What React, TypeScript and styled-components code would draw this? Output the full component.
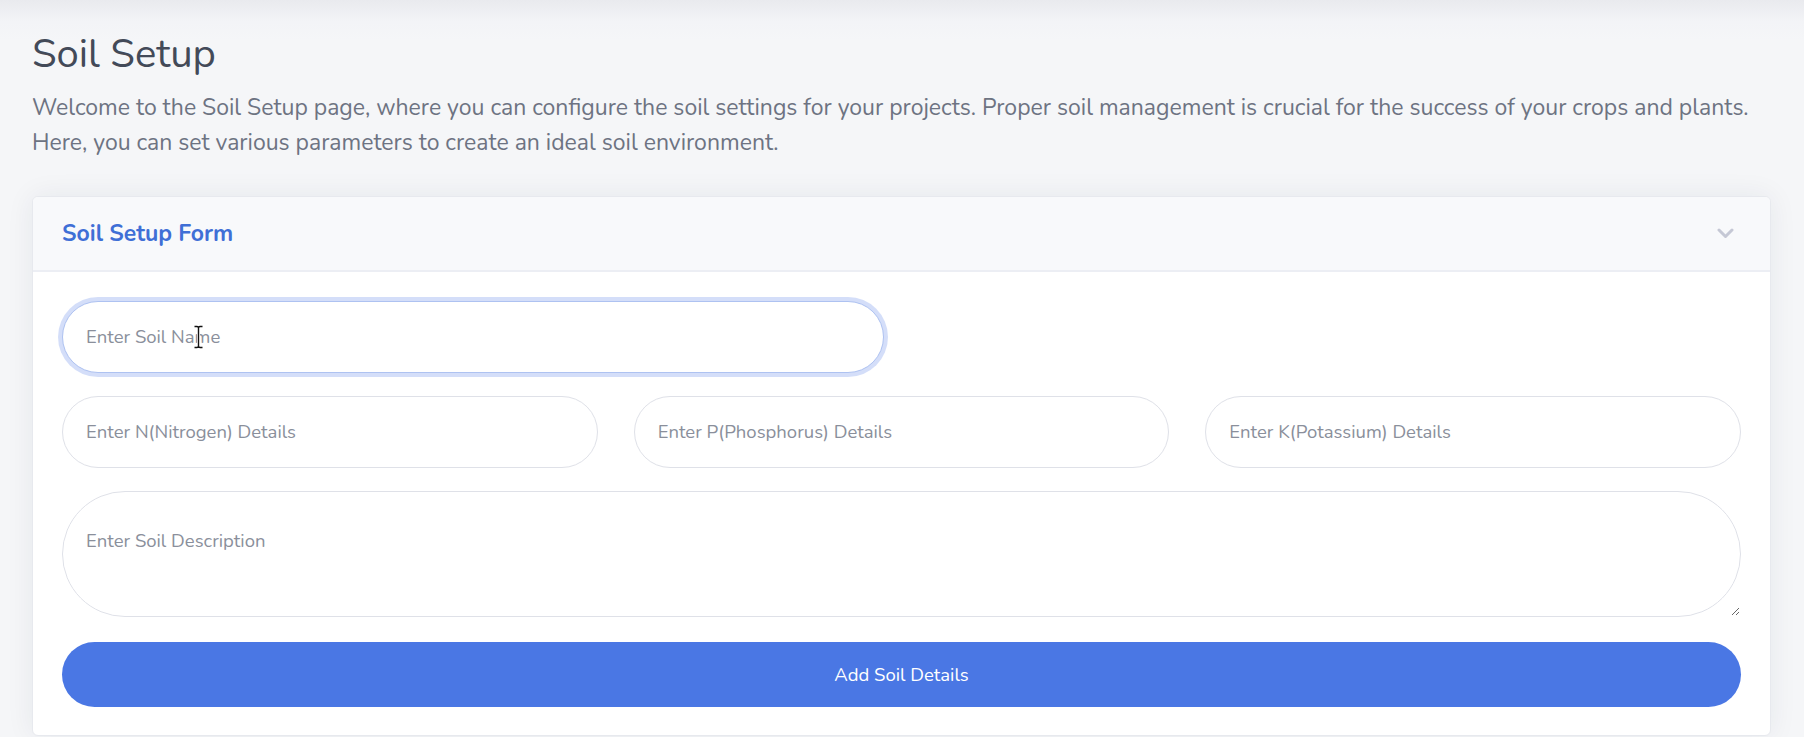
import React from "react";
import styled, { createGlobalStyle } from "styled-components";

const GlobalStyle = createGlobalStyle`
  html, body { margin: 0; padding: 0; }
  body {
    background: #f5f6f8;
    font-family: Nunito, "Open Sans", "Noto Sans", sans-serif;
  }
  * { box-sizing: border-box; }
`;

const Page = styled.main`
  min-height: 737px;
  padding: 30px 33px 0 32px;
  background: linear-gradient(#e9eaee 0px, #f3f4f7 22px, #f5f6f8 40px);
`;

const Title = styled.h1`
  margin: 0;
  font-size: 40px;
  line-height: 48px;
  font-weight: 400;
  color: #434a58;
`;

const Intro = styled.p`
  margin: 12px 0 36px;
  font-size: 23px;
  line-height: 35px;
  color: #6d7382;
`;

const Card = styled.section`
  background: #ffffff;
  border: 1px solid #e7e9ee;
  border-radius: 6px;
  box-shadow: 0 0 28px rgba(30, 40, 70, 0.07);
  overflow: hidden;
`;

const CardHeader = styled.header`
  display: flex;
  align-items: center;
  justify-content: space-between;
  height: 75px;
  padding: 0 36px 0 29px;
  background: #f8f9fb;
  border-bottom: 2px solid #eceef4;
`;

const CardTitle = styled.h2`
  margin: 0;
  font-size: 23px;
  font-weight: 700;
  color: #3f6fd6;
`;

const Chevron = styled.svg`
  width: 17px;
  height: 11px;
  display: block;
`;

const CardBody = styled.form`
  display: flex;
  flex-direction: column;
  gap: 23px;
  padding: 29px 29px 28px;
`;

const HalfRow = styled.div`
  display: grid;
  grid-template-columns: repeat(2, 1fr);
  column-gap: 36px;
`;

const TripleRow = styled.div`
  display: grid;
  grid-template-columns: repeat(3, 1fr);
  column-gap: 36px;
`;

const FieldWrap = styled.div`
  position: relative;
`;

const TextInput = styled.input<{ $focused?: boolean }>`
  width: 100%;
  height: 72px;
  padding: 0 23px;
  border: 1px solid ${(p) => (p.$focused ? "#aec2f1" : "#dfe1e8")};
  border-radius: 50rem;
  background: #fff;
  font-family: inherit;
  font-size: 18.5px;
  color: #3d4451;
  outline: none;
  box-shadow: ${(p) => (p.$focused ? "0 0 0 4px rgba(74, 119, 228, 0.24)" : "none")};
  &::placeholder { color: #8a8f9b; }
`;

const TextArea = styled.textarea`
  width: 100%;
  height: 126px;
  padding: 36px 23px 20px;
  border: 1px solid #dfe1e8;
  border-radius: 50rem;
  background: #fff;
  font-family: inherit;
  font-size: 18.5px;
  line-height: 27px;
  color: #3d4451;
  outline: none;
  display: block;
  &::placeholder { color: #8a8f9b; }
`;

const SubmitButton = styled.button`
  margin-top: 2px;
  height: 65px;
  width: 100%;
  border: none;
  border-radius: 50rem;
  background: #4a77e4;
  color: #ffffff;
  font-family: inherit;
  font-size: 18.5px;
  cursor: pointer;
`;

const MouseCursor = styled.svg`
  position: absolute;
  left: 131px;
  top: 24px;
  width: 11px;
  height: 24px;
  pointer-events: none;
`;

const beam =
  "M1.5 1.5 H4 Q5.5 1.5 5.5 3 Q5.5 1.5 7 1.5 H9.5 M5.5 3 V21 M1.5 22.5 H4 Q5.5 22.5 5.5 21 Q5.5 22.5 7 22.5 H9.5";

export default function App() {
  return (
    <>
      <GlobalStyle />
      <Page>
        <Title>Soil Setup</Title>
        <Intro>
          Welcome to the Soil Setup page, where you can configure the soil settings for your projects. Proper soil
          management is crucial for the success of your crops and plants. Here, you can set various parameters to
          create an ideal soil environment.
        </Intro>
        <Card>
          <CardHeader>
            <CardTitle>Soil Setup Form</CardTitle>
            <Chevron viewBox="0 0 17 11" aria-hidden>
              <polyline
                points="2,2 8.5,8.5 15,2"
                fill="none"
                stroke="#c5c8d5"
                strokeWidth="3"
                strokeLinecap="round"
                strokeLinejoin="round"
              />
            </Chevron>
          </CardHeader>
          <CardBody onSubmit={(e) => e.preventDefault()}>
            <HalfRow>
              <FieldWrap>
                <TextInput $focused placeholder="Enter Soil Name" />
                <MouseCursor viewBox="0 0 11 24" aria-hidden>
                  <path d={beam} fill="none" stroke="#ffffff" strokeWidth="3" />
                  <path d={beam} fill="none" stroke="#111111" strokeWidth="1.4" />
                </MouseCursor>
              </FieldWrap>
            </HalfRow>
            <TripleRow>
              <TextInput placeholder="Enter N(Nitrogen) Details" />
              <TextInput placeholder="Enter P(Phosphorus) Details" />
              <TextInput placeholder="Enter K(Potassium) Details" />
            </TripleRow>
            <TextArea placeholder="Enter Soil Description" />
            <SubmitButton type="submit">Add Soil Details</SubmitButton>
          </CardBody>
        </Card>
      </Page>
    </>
  );
}
